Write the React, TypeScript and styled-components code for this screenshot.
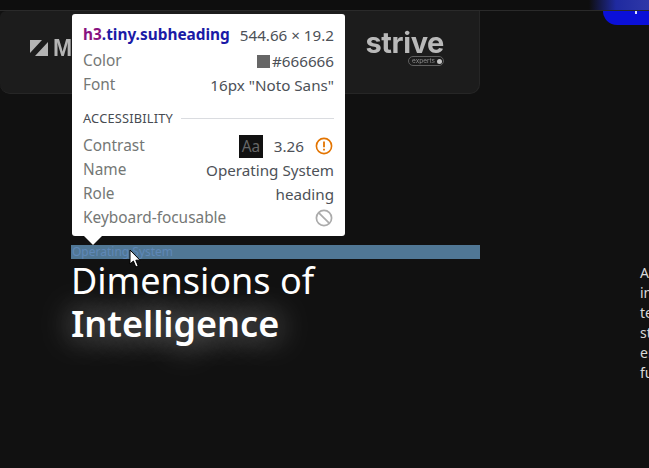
import { createGlobalStyle } from "styled-components";
import styled from "styled-components";

const GlobalStyle = createGlobalStyle`
  html, body {
    margin: 0;
    padding: 0;
    background: #111111;
    font-family: "Noto Sans", sans-serif;
  }
`;

const Page = styled.div`
  position: relative;
  width: 649px;
  height: 468px;
  overflow: hidden;
  background: #111111;
`;

const TopBar = styled.header`
  height: 10px;
  background: #0e0e0e;
  border-bottom: 1px solid #2a2a2a;
`;

const Glow = styled.div`
  position: absolute;
  top: 0;
  right: 0;
  width: 60px;
  height: 10px;
  background: linear-gradient(90deg, rgba(40, 50, 170, 0) 0%, #1f2aa0 45%, #2f38a8 100%);
`;

const CtaButton = styled.div`
  position: absolute;
  top: 11px;
  left: 603px;
  width: 80px;
  height: 14px;
  background: #0b10d8;
  border-radius: 0 0 0 20px;
`;

const CtaMark = styled.span`
  position: absolute;
  top: 11px;
  left: 635px;
  width: 2px;
  height: 3px;
  background: #d7dcff;
`;

const LogoCard = styled.div`
  display: grid;
  grid-template-columns: 1fr 1fr 130px;
  align-items: center;
  width: 480px;
  height: 83px;
  box-sizing: border-box;
  padding-bottom: 8px;
  background: #1c1c1c;
  border-bottom: 1px solid #262626;
  border-right: 1px solid #262626;
  border-radius: 6px 0 10px 10px;
`;

const LogoCell = styled.div`
  display: flex;
  align-items: center;
  padding-left: 30px;
  color: #b4b4b4;
  filter: blur(0.4px);
`;

const MonoLetter = styled.span`
  margin-left: 5px;
  font-family: "Liberation Sans", sans-serif;
  font-size: 23px;
  font-weight: 700;
  line-height: 16px;
`;

const StriveLogo = styled.div`
  display: flex;
  flex-direction: column;
  align-items: flex-end;
  width: 78px;
  margin-left: 17px;
  color: #b9b9b9;
  filter: blur(0.6px);
`;

const StriveWord = styled.span`
  font-family: "Inter", sans-serif;
  font-size: 29px;
  font-weight: 700;
  line-height: 26px;
  letter-spacing: -0.4px;
`;

const StriveBadge = styled.span`
  display: flex;
  align-items: center;
  gap: 2px;
  height: 8px;
  padding: 0 1px 0 3px;
  border: 1px solid #5f5f5f;
  border-radius: 6px;
  font-family: "Inter", sans-serif;
  font-size: 6.5px;
  line-height: 8px;
  color: #8d8d8d;

  &::after {
    content: "";
    width: 5px;
    height: 5px;
    border-radius: 50%;
    background: #c4c4c4;
  }
`;

const Section = styled.section`
  padding: 151px 0 0 71px;
  width: 409px;
`;

const Subheading = styled.h3`
  margin: 0;
  height: 14px;
  padding-left: 1px;
  background: #507795;
  color: #5f88b8;
  font-size: 12px;
  font-weight: 400;
  line-height: 14px;
`;

const Heading = styled.h2`
  margin: 0;
  color: #ffffff;
  font-size: 36px;
  font-weight: 400;
  line-height: 43px;
`;

const HeadingStrong = styled.strong`
  display: block;
  font-weight: 600;
  text-shadow: 0 0 32px rgba(255, 255, 255, 0.7);
`;

const SideCopy = styled.p`
  position: absolute;
  top: 263px;
  left: 640px;
  width: 200px;
  margin: 0;
  color: #d8d8d8;
  font-size: 14px;
  line-height: 20px;
`;

const Tooltip = styled.div`
  position: absolute;
  top: 14px;
  left: 72px;
  width: 273px;
  height: 222px;
  box-sizing: border-box;
  padding: 7px 11px 0;
  background: #ffffff;
  border-radius: 3px;
  font-size: 15.4px;
  line-height: 24px;

  &::after {
    content: "";
    position: absolute;
    left: 12px;
    bottom: -9px;
    border-left: 9px solid transparent;
    border-right: 9px solid transparent;
    border-top: 9px solid #ffffff;
  }
`;

const TipRow = styled.div<{ $first?: boolean }>`
  display: flex;
  justify-content: space-between;
  align-items: center;
  height: ${(p) => (p.$first ? "28px" : "24px")};
  white-space: nowrap;
`;

const TipSelector = styled.span`
  font-weight: 700;
  color: #1a1aa6;
`;

const TipTag = styled.span`
  color: #881280;
`;

const TipLabel = styled.span`
  color: #747775;
`;

const TipValue = styled.span`
  display: flex;
  align-items: center;
  font-size: 15.2px;
  color: #4d5157;
`;

const Swatch = styled.i`
  width: 13px;
  height: 13px;
  margin-right: 2px;
  background: #666666;
`;

const TipSection = styled.div`
  display: flex;
  align-items: center;
  gap: 8px;
  height: 24px;
  margin: 9px 0 4px;
  font-size: 12.8px;
  letter-spacing: 0.2px;
  color: #474b52;

  &::after {
    content: "";
    flex: 1;
    height: 1px;
    background: #dadce0;
  }
`;

const ContrastChip = styled.span`
  width: 24px;
  height: 23px;
  margin-right: 11px;
  background: #111111;
  color: #666666;
  font-size: 15.4px;
  line-height: 23px;
  text-align: center;
`;

const StatusIcon = styled.svg<{ $gap?: boolean }>`
  margin: 0 1px 0 ${(p) => (p.$gap ? "11px" : "0")};
`;

const Cursor = styled.svg`
  position: absolute;
  top: 249px;
  left: 129px;
`;

export default function App() {
  return (
    <Page>
      <GlobalStyle />
      <TopBar />
      <Glow />
      <CtaButton />
      <CtaMark />
      <LogoCard>
        <LogoCell>
          <svg width="18" height="16" viewBox="0 0 18 16">
            <path d="M0 0h12L0 13zM18 2v14H5z" fill="currentColor" />
          </svg>
          <MonoLetter>M</MonoLetter>
        </LogoCell>
        <LogoCell />
        <StriveLogo>
          <StriveWord>strive</StriveWord>
          <StriveBadge>experts</StriveBadge>
        </StriveLogo>
      </LogoCard>
      <Section>
        <Subheading>Operating System</Subheading>
        <Heading>
          Dimensions of
          <HeadingStrong>Intelligence</HeadingStrong>
        </Heading>
      </Section>
      <SideCopy>
        At
        <br />
        in
        <br />
        te
        <br />
        st
        <br />
        en
        <br />
        fu
      </SideCopy>
      <Tooltip>
        <TipRow $first>
          <TipSelector>
            <TipTag>h3</TipTag>.tiny.subheading
          </TipSelector>
          <TipValue>544.66 × 19.2</TipValue>
        </TipRow>
        <TipRow>
          <TipLabel>Color</TipLabel>
          <TipValue>
            <Swatch />
            #666666
          </TipValue>
        </TipRow>
        <TipRow>
          <TipLabel>Font</TipLabel>
          <TipValue>16px "Noto Sans"</TipValue>
        </TipRow>
        <TipSection>ACCESSIBILITY</TipSection>
        <TipRow>
          <TipLabel>Contrast</TipLabel>
          <TipValue>
            <ContrastChip>Aa</ContrastChip>
            3.26
            <StatusIcon $gap width="18" height="18" viewBox="0 0 18 18">
              <circle cx="9" cy="9" r="7.6" fill="none" stroke="#e37400" strokeWidth="1.6" />
              <path d="M9 4.6v5.6M9 11.8v1.7" stroke="#e37400" strokeWidth="1.8" fill="none" />
            </StatusIcon>
          </TipValue>
        </TipRow>
        <TipRow>
          <TipLabel>Name</TipLabel>
          <TipValue>Operating System</TipValue>
        </TipRow>
        <TipRow>
          <TipLabel>Role</TipLabel>
          <TipValue>heading</TipValue>
        </TipRow>
        <TipRow>
          <TipLabel>Keyboard-focusable</TipLabel>
          <TipValue>
            <StatusIcon width="18" height="18" viewBox="0 0 18 18">
              <circle cx="9" cy="9" r="7.6" fill="none" stroke="#ababab" strokeWidth="1.7" />
              <path d="M3.8 3.8l10.4 10.4" stroke="#ababab" strokeWidth="1.7" fill="none" />
            </StatusIcon>
          </TipValue>
        </TipRow>
      </Tooltip>
      <Cursor width="13" height="20" viewBox="0 0 13 20">
        <path d="M1 1v14l3.4-3 2.4 6 2.4-1-2.4-5.8H11z" fill="#ffffff" stroke="#000000" strokeWidth="1" />
      </Cursor>
    </Page>
  );
}
